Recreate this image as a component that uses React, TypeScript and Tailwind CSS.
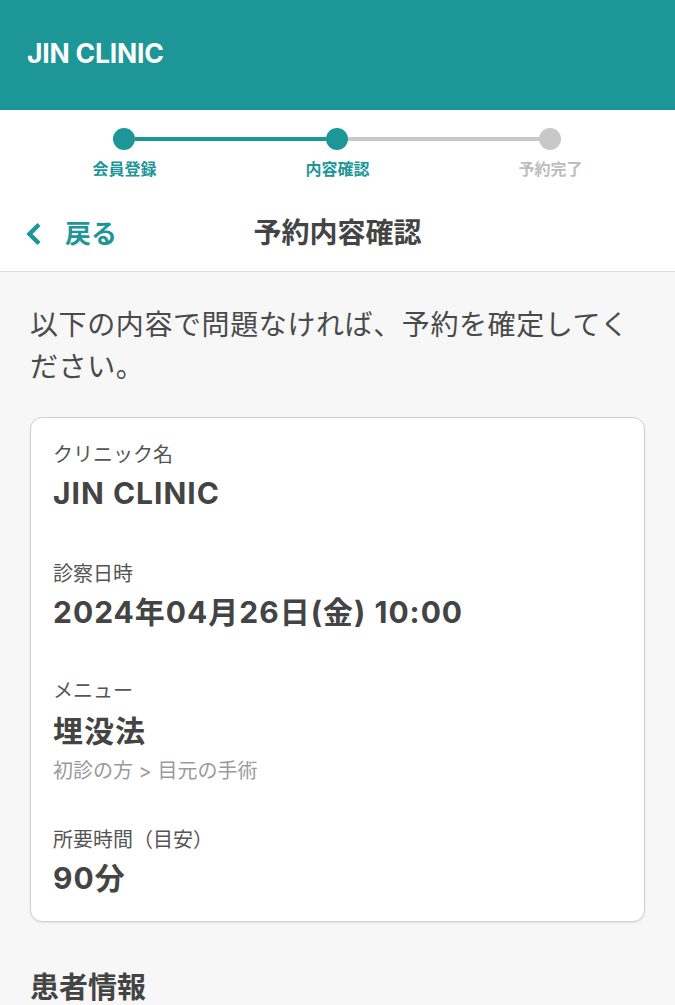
import React from "react";

const FONT = { fontFamily: 'Inter, "Noto Sans CJK JP", sans-serif' };

function Item({ label, value, sub, top, vtop = "mt-[3px]" }: { label: string; value: string; sub?: string; top: string; vtop?: string }) {
  return (
    <div className={`flex flex-col ${top}`}>
      <div className="text-[20px] leading-[30px] text-[#555555]">{label}</div>
      <div className={`${vtop} text-[30px] leading-[40px] font-bold tracking-[1px] text-[#444444]`}>{value}</div>
      {sub && <div className="mt-[6px] text-[20px] leading-[28px] text-[#9a9a9a]">{sub}</div>}
    </div>
  );
}

export default function App() {
  return (
    <div className="w-[675px] h-[1005px] overflow-hidden bg-[#f7f7f7]" style={FONT}>
      <header className="h-[110px] bg-[#1c9696] flex items-center pl-[27px]">
        <span className="text-white font-bold text-[26.5px] tracking-[-0.2px] mt-[-2px]">JIN CLINIC</span>
      </header>

      <div className="bg-white border-b border-[#dddddd]">
        <div className="pt-[18px]">
          <div className="flex items-center pl-[113px] pr-[114px]">
            <div className="w-[22px] h-[22px] rounded-full bg-[#1c9696]" />
            <div className="flex-1 h-[4px] bg-[#1c9696]" />
            <div className="w-[22px] h-[22px] rounded-full bg-[#1c9696]" />
            <div className="flex-1 h-[4px] bg-[#c8c8c8]" />
            <div className="w-[22px] h-[22px] rounded-full bg-[#c8c8c8]" />
          </div>
          <div className="grid grid-cols-3 px-[18px] mt-[7px] text-[16px] leading-[24px] font-bold text-center">
            <span className="text-[#1c9696]">会員登録</span>
            <span className="text-[#1c9696]">内容確認</span>
            <span className="text-[#bdbdbd]">予約完了</span>
          </div>
        </div>
        <div className="mt-[14px] h-[76px] grid grid-cols-[1fr_auto_1fr] items-center">
          <div className="flex items-center pl-[24px]">
            <svg width="20" height="26" viewBox="0 0 20 26" className="mt-[1px]">
              <path d="M15 3.5 L5.5 13 L15 22.5" fill="none" stroke="#1c9696" strokeWidth="4.5" strokeLinejoin="miter" />
            </svg>
            <span className="ml-[21px] text-[26px] font-bold text-[#1c9696]">戻る</span>
          </div>
          <div className="text-[28px] font-bold text-[#444444]">予約内容確認</div>
          <div />
        </div>
      </div>

      <div className="px-[30px] pt-[32px]">
        <p className="text-[28px] leading-[42px] tracking-[0.6px] text-[#4a4a4a]">
          以下の内容で問題なければ、予約を確定してください。
        </p>

        <div className="mt-[29px] bg-white border-[1.5px] border-[#cfcfcf] rounded-[12px] shadow-[0_1px_2px_rgba(0,0,0,0.08)] px-[22px] pt-[22px] pb-[23px]">
          <Item label="クリニック名" value="JIN CLINIC" top="" />
          <Item label="診察日時" value="2024年04月26日(金) 10:00" top="mt-[46px]" />
          <Item label="メニュー" value="埋没法" sub="初診の方 > 目元の手術" top="mt-[44px]" vtop="mt-[5px]" />
          <Item label="所要時間（目安）" value="90分" top="mt-[40px]" />
        </div>
      </div>

      <div className="mt-[46px] px-[30px] border-b border-[#dddddd]">
        <h2 className="text-[29px] leading-[40px] font-bold text-[#444444]">患者情報</h2>
      </div>
    </div>
  );
}
